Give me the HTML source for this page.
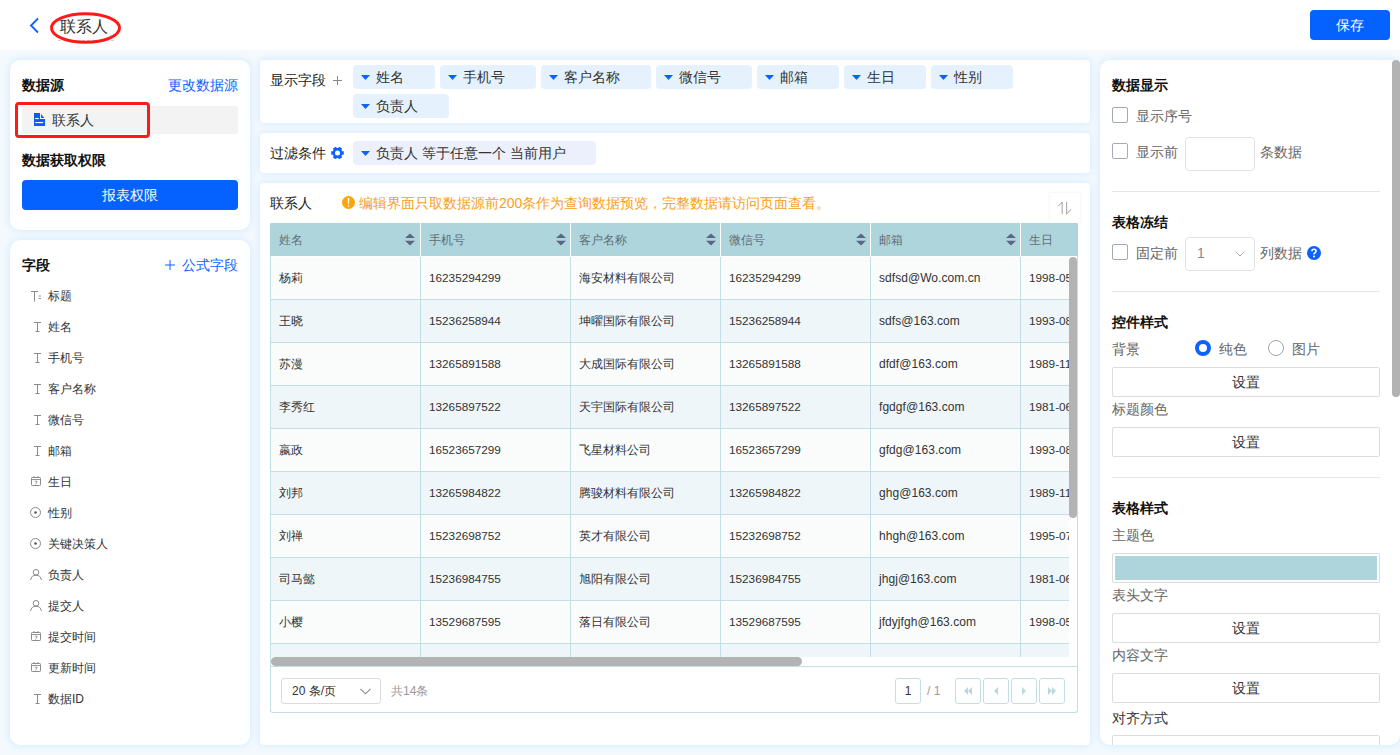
<!DOCTYPE html>
<html><head><meta charset="utf-8">
<style>
*{box-sizing:border-box;margin:0;padding:0}
html,body{width:1400px;height:755px;overflow:hidden}
body{position:relative;background:#f4f9fe;font-family:"Liberation Sans",sans-serif;color:#333;font-size:14px}
.a{position:absolute;white-space:nowrap}
.hdr{left:0;top:0;width:1400px;height:50px;background:#fff}
.panel{position:absolute;background:#fff;box-shadow:0 0 6px 1px rgba(212,236,255,.95)}
.t14{font-size:14px;line-height:16px}
.t12{font-size:12px;line-height:14px}
.b{font-weight:bold;color:#111}
.blue{color:#0d62ff}
/* left fields */
.fld{position:absolute;left:48px;font-size:12px;line-height:14px;color:#333}
.ic{position:absolute;left:30px}
.chip{position:absolute;height:24px;background:#e5f2fe;border-radius:4px;font-size:14px;line-height:24px;color:#333}
.chip .tri{position:absolute;left:8px;top:9.5px}
.chip span{position:absolute;left:23px;top:0}
.th{position:absolute;top:0;width:150px;height:33px;border-left:1px solid #fff;font-size:12px;line-height:35px;color:#5f6f78;padding-left:8px}
.th .srt{position:absolute;left:135px;top:10px}
.tr{position:absolute;left:0;width:900px;height:43px;border-bottom:1px solid #c3dfe6}
.td{position:absolute;top:0;width:150px;height:42px;border-left:1px solid #c3dfe6;font-size:12px;line-height:42px;color:#333;padding-left:8px;overflow:hidden}
.pg{border:1px solid #c3dfe6;border-radius:3px;background:#fff}
.lat{font-size:11.75px}
.em{font-size:12px;letter-spacing:0.05px}
</style></head><body>
<div class="a hdr"></div>
<!-- back arrow -->
<svg class="a" style="left:28px;top:17px" width="13" height="17" viewBox="0 0 13 17"><path d="M10 1.5 L3 8.5 L10 15.5" fill="none" stroke="#0d62ff" stroke-width="1.8"/></svg>
<div class="a" style="left:58px;top:40px;width:56px;height:1px;border-top:1px dashed #d4d4d4"></div><div class="a" style="left:60px;top:17px;font-size:16px;line-height:19px;color:#333">联系人</div>
<svg class="a" style="left:50px;top:12px" width="72" height="33" viewBox="0 0 72 33"><ellipse cx="35.5" cy="16" rx="34" ry="14.3" fill="none" stroke="#ff1a1a" stroke-width="3"/></svg>
<div class="a" style="left:1310px;top:10px;width:80px;height:30px;background:#0662ff;border-radius:4px;color:#fff;font-size:14px;line-height:30px;text-align:center">保存</div>

<!-- left panel 1 -->
<div class="panel" style="left:10px;top:60px;width:240px;height:170px;border-radius:10px"></div>
<div class="a t14 b" style="left:22px;top:77px">数据源</div>
<div class="a t14 blue" style="left:168px;top:77px">更改数据源</div>
<div class="a" style="left:22px;top:106px;width:216px;height:28px;background:#f3f3f3;border-radius:2px"></div>
<svg class="a" style="left:33px;top:113px" width="12" height="13" viewBox="0 0 12 13"><path d="M1 0H7V5.9H12V13H1Z" fill="#0b5cff"/><path d="M8 0.9V4.9H11.3Z" fill="#0b5cff"/><rect x="2.2" y="5" width="3.6" height="1.1" fill="#fff"/><rect x="2.2" y="9" width="8" height="1.1" fill="#fff"/></svg>
<div class="a t14" style="left:52px;top:112px;color:#333">联系人</div>
<div class="a" style="left:15px;top:102px;width:135px;height:36px;border:3px solid #ff1a1a;border-radius:4px"></div>
<div class="a t14 b" style="left:22px;top:152px">数据获取权限</div>
<div class="a" style="left:22px;top:180px;width:216px;height:30px;background:#0662ff;border-radius:4px;color:#fff;font-size:14px;line-height:30px;text-align:center">报表权限</div>

<!-- left panel 2 -->
<div class="panel" style="left:10px;top:240px;width:240px;height:505px;border-radius:10px"></div>
<div class="a t14 b" style="left:22px;top:257px">字段</div>
<svg class="a" style="left:165px;top:260px" width="10" height="10" viewBox="0 0 10 10"><path d="M5 0V10M0 5H10" stroke="#0d62ff" stroke-width="1"/></svg><div class="a t14 blue" style="left:182px;top:257px">公式字段</div>
<div class="a" style="left:31px;top:291px;line-height:0"><svg width="11" height="11" viewBox="0 0 11 11"><path d="M0 0.5H7M3.5 0.5V10.5" stroke="#8a8a8a" stroke-width="1" fill="none"/><path d="M7.5 5H10M7.5 7.5H10" stroke="#8a8a8a" stroke-width="0.9" fill="none"/></svg></div><div class="fld" style="top:289px">标题</div>
<div class="a" style="left:33px;top:322px;line-height:0"><svg width="9" height="10" viewBox="0 0 9 10"><path d="M1 0.5H8M4.5 0.5V9.5M2.5 9.5H6.5" stroke="#8a8a8a" stroke-width="1" fill="none"/></svg></div><div class="fld" style="top:320px">姓名</div>
<div class="a" style="left:33px;top:353px;line-height:0"><svg width="9" height="10" viewBox="0 0 9 10"><path d="M1 0.5H8M4.5 0.5V9.5M2.5 9.5H6.5" stroke="#8a8a8a" stroke-width="1" fill="none"/></svg></div><div class="fld" style="top:351px">手机号</div>
<div class="a" style="left:33px;top:384px;line-height:0"><svg width="9" height="10" viewBox="0 0 9 10"><path d="M1 0.5H8M4.5 0.5V9.5M2.5 9.5H6.5" stroke="#8a8a8a" stroke-width="1" fill="none"/></svg></div><div class="fld" style="top:382px">客户名称</div>
<div class="a" style="left:33px;top:415px;line-height:0"><svg width="9" height="10" viewBox="0 0 9 10"><path d="M1 0.5H8M4.5 0.5V9.5M2.5 9.5H6.5" stroke="#8a8a8a" stroke-width="1" fill="none"/></svg></div><div class="fld" style="top:413px">微信号</div>
<div class="a" style="left:33px;top:446px;line-height:0"><svg width="9" height="10" viewBox="0 0 9 10"><path d="M1 0.5H8M4.5 0.5V9.5M2.5 9.5H6.5" stroke="#8a8a8a" stroke-width="1" fill="none"/></svg></div><div class="fld" style="top:444px">邮箱</div>
<div class="a" style="left:31px;top:476px;line-height:0"><svg width="10" height="10" viewBox="0 0 10 10"><rect x="0.5" y="1.5" width="9" height="8" rx="0.8" fill="none" stroke="#8a8a8a" stroke-width="1"/><path d="M0.5 3.5H9.5M3 0V2M7 0V2" stroke="#8a8a8a" stroke-width="0.9"/><path d="M3.6 5.2H6.2L4.6 8.4" stroke="#8a8a8a" stroke-width="0.8" fill="none"/></svg></div><div class="fld" style="top:475px">生日</div>
<div class="a" style="left:30px;top:507px;line-height:0"><svg width="11" height="11" viewBox="0 0 11 11"><circle cx="5.5" cy="5.5" r="5" fill="none" stroke="#8a8a8a" stroke-width="1"/><circle cx="5.5" cy="5.5" r="1.3" fill="#555"/></svg></div><div class="fld" style="top:506px">性别</div>
<div class="a" style="left:30px;top:538px;line-height:0"><svg width="11" height="11" viewBox="0 0 11 11"><circle cx="5.5" cy="5.5" r="5" fill="none" stroke="#8a8a8a" stroke-width="1"/><circle cx="5.5" cy="5.5" r="1.3" fill="#555"/></svg></div><div class="fld" style="top:537px">关键决策人</div>
<div class="a" style="left:30px;top:569px;line-height:0"><svg width="12" height="11" viewBox="0 0 12 11"><circle cx="6" cy="3.3" r="2.8" fill="none" stroke="#8a8a8a" stroke-width="1"/><path d="M0.6 11Q1.3 6.2 6 6.2Q10.7 6.2 11.4 11" fill="none" stroke="#8a8a8a" stroke-width="1"/></svg></div><div class="fld" style="top:568px">负责人</div>
<div class="a" style="left:30px;top:600px;line-height:0"><svg width="12" height="11" viewBox="0 0 12 11"><circle cx="6" cy="3.3" r="2.8" fill="none" stroke="#8a8a8a" stroke-width="1"/><path d="M0.6 11Q1.3 6.2 6 6.2Q10.7 6.2 11.4 11" fill="none" stroke="#8a8a8a" stroke-width="1"/></svg></div><div class="fld" style="top:599px">提交人</div>
<div class="a" style="left:31px;top:631px;line-height:0"><svg width="10" height="10" viewBox="0 0 10 10"><rect x="0.5" y="1.5" width="9" height="8" rx="0.8" fill="none" stroke="#8a8a8a" stroke-width="1"/><path d="M0.5 3.5H9.5M3 0V2M7 0V2" stroke="#8a8a8a" stroke-width="0.9"/><path d="M3.6 5.2H6.2L4.6 8.4" stroke="#8a8a8a" stroke-width="0.8" fill="none"/></svg></div><div class="fld" style="top:630px">提交时间</div>
<div class="a" style="left:31px;top:662px;line-height:0"><svg width="10" height="10" viewBox="0 0 10 10"><rect x="0.5" y="1.5" width="9" height="8" rx="0.8" fill="none" stroke="#8a8a8a" stroke-width="1"/><path d="M0.5 3.5H9.5M3 0V2M7 0V2" stroke="#8a8a8a" stroke-width="0.9"/><path d="M3.6 5.2H6.2L4.6 8.4" stroke="#8a8a8a" stroke-width="0.8" fill="none"/></svg></div><div class="fld" style="top:661px">更新时间</div>
<div class="a" style="left:33px;top:694px;line-height:0"><svg width="9" height="10" viewBox="0 0 9 10"><path d="M1 0.5H8M4.5 0.5V9.5M2.5 9.5H6.5" stroke="#8a8a8a" stroke-width="1" fill="none"/></svg></div><div class="fld" style="top:692px">数据ID</div>

<div class="panel" style="left:260px;top:60px;width:830px;height:63px;border-radius:4px"></div>
<div class="a t14" style="left:270px;top:72px;color:#222">显示字段</div>
<svg class="a" style="left:333px;top:76px" width="9" height="9" viewBox="0 0 9 9"><path d="M4.5 0V9M0 4.5H9" stroke="#888" stroke-width="1"/></svg>
<div class="chip" style="left:353px;top:65px;width:82px"><svg class="tri" width="9" height="5" viewBox="0 0 9 5"><path d="M0 0H9L4.5 5Z" fill="#0d62ff"/></svg><span>姓名</span></div>
<div class="chip" style="left:440px;top:65px;width:96px"><svg class="tri" width="9" height="5" viewBox="0 0 9 5"><path d="M0 0H9L4.5 5Z" fill="#0d62ff"/></svg><span>手机号</span></div>
<div class="chip" style="left:541px;top:65px;width:110px"><svg class="tri" width="9" height="5" viewBox="0 0 9 5"><path d="M0 0H9L4.5 5Z" fill="#0d62ff"/></svg><span>客户名称</span></div>
<div class="chip" style="left:656px;top:65px;width:96px"><svg class="tri" width="9" height="5" viewBox="0 0 9 5"><path d="M0 0H9L4.5 5Z" fill="#0d62ff"/></svg><span>微信号</span></div>
<div class="chip" style="left:757px;top:65px;width:82px"><svg class="tri" width="9" height="5" viewBox="0 0 9 5"><path d="M0 0H9L4.5 5Z" fill="#0d62ff"/></svg><span>邮箱</span></div>
<div class="chip" style="left:844px;top:65px;width:82px"><svg class="tri" width="9" height="5" viewBox="0 0 9 5"><path d="M0 0H9L4.5 5Z" fill="#0d62ff"/></svg><span>生日</span></div>
<div class="chip" style="left:931px;top:65px;width:82px"><svg class="tri" width="9" height="5" viewBox="0 0 9 5"><path d="M0 0H9L4.5 5Z" fill="#0d62ff"/></svg><span>性别</span></div>
<div class="chip" style="left:353px;top:94px;width:96px"><svg class="tri" width="9" height="5" viewBox="0 0 9 5"><path d="M0 0H9L4.5 5Z" fill="#0d62ff"/></svg><span>负责人</span></div>
<div class="panel" style="left:260px;top:133px;width:830px;height:40px;border-radius:4px"></div>
<div class="a t14" style="left:270px;top:145px;color:#222">过滤条件</div>
<svg class="a" style="left:331px;top:147px" width="13" height="12" viewBox="0 0 13 12"><path fill-rule="evenodd" d="M11.14 4.13 L12.78 4.32 L12.78 7.68 L11.14 7.87 L10.44 9.08 L11.10 10.60 L8.18 12.28 L7.20 10.95 L5.80 10.95 L4.82 12.28 L1.90 10.60 L2.56 9.08 L1.86 7.87 L0.22 7.68 L0.22 4.32 L1.86 4.13 L2.56 2.92 L1.90 1.40 L4.82 -0.28 L5.80 1.05 L7.20 1.05 L8.18 -0.28 L11.10 1.40 L10.44 2.92Z M9.0 6 A2.5 2.5 0 1 0 4.0 6 A2.5 2.5 0 1 0 9.0 6Z" fill="#0d62ff"/></svg>
<div class="chip" style="left:353px;top:141px;width:243px;background:#ebf0fc"><svg class="tri" width="9" height="5" viewBox="0 0 9 5"><path d="M0 0H9L4.5 5Z" fill="#0d62ff"/></svg><span>负责人 等于任意一个 当前用户</span></div>
<div class="panel" style="left:260px;top:183px;width:830px;height:562px;border-radius:4px"></div>
<div class="a t14" style="left:270px;top:195px;color:#222">联系人</div>
<svg class="a" style="left:342px;top:196px" width="13" height="13" viewBox="0 0 13 13"><circle cx="6.5" cy="6.5" r="6.5" fill="#ffa30a"/><path d="M5.6 2H7.4L7 8.3H6Z" fill="#fff"/><rect x="5.8" y="9.4" width="1.4" height="1.4" fill="#fff"/></svg>
<div class="a t14" style="left:359px;top:195px;color:#f9a01a">编辑界面只取数据源前200条作为查询数据预览，完整数据请访问页面查看。</div>
<div class="a" style="left:1050px;top:193px;width:30px;height:30px;background:#fff;box-shadow:0 0 3px rgba(0,0,0,.08)"></div>
<svg class="a" style="left:1056px;top:200px" width="16" height="16" viewBox="0 0 16 16"><path d="M2.2 6.3L6.2 2V14.2M10.7 2V14.2L15 9.2" stroke="#a0a0a0" stroke-width="1" fill="none"/></svg>
<div class="a" style="left:270px;top:223px;width:808px;height:490px;border:1px solid #c3dfe6;border-top:none;border-radius:0 0 3px 3px"></div>
<div class="a" style="left:270px;top:223px;width:808px;height:33px;background:#aed4dc;overflow:hidden;border-radius:2px 2px 0 0">
<div class="th" style="left:0px;border-left:none;padding-left:9px">姓名<svg class="srt" width="10" height="13" viewBox="0 0 10 13"><path d="M5 0.4L10 5H0Z M0 7.8H10L5 12.4Z" fill="#5b6680"/></svg></div>
<div class="th" style="left:150px">手机号<svg class="srt" width="10" height="13" viewBox="0 0 10 13"><path d="M5 0.4L10 5H0Z M0 7.8H10L5 12.4Z" fill="#5b6680"/></svg></div>
<div class="th" style="left:300px">客户名称<svg class="srt" width="10" height="13" viewBox="0 0 10 13"><path d="M5 0.4L10 5H0Z M0 7.8H10L5 12.4Z" fill="#5b6680"/></svg></div>
<div class="th" style="left:450px">微信号<svg class="srt" width="10" height="13" viewBox="0 0 10 13"><path d="M5 0.4L10 5H0Z M0 7.8H10L5 12.4Z" fill="#5b6680"/></svg></div>
<div class="th" style="left:600px">邮箱<svg class="srt" width="10" height="13" viewBox="0 0 10 13"><path d="M5 0.4L10 5H0Z M0 7.8H10L5 12.4Z" fill="#5b6680"/></svg></div>
<div class="th" style="left:750px">生日</div>
</div>
<div class="a" style="left:270px;top:257px;width:799px;height:400px;overflow:hidden">
<div class="tr" style="top:0px;background:#fafcfc">
<div class="td" style="left:0px;padding-left:8px">杨莉</div>
<div class="td" style="left:150px"><span class="lat">16235294299</span></div>
<div class="td" style="left:300px">海安材料有限公司</div>
<div class="td" style="left:450px"><span class="lat">16235294299</span></div>
<div class="td" style="left:600px"><span class="em">sdfsd@Wo.com.cn</span></div>
<div class="td" style="left:750px"><span class="lat">1998-05-12</span></div>
</div>
<div class="tr" style="top:43px;background:#eff6f9">
<div class="td" style="left:0px;padding-left:8px">王晓</div>
<div class="td" style="left:150px"><span class="lat">15236258944</span></div>
<div class="td" style="left:300px">坤曜国际有限公司</div>
<div class="td" style="left:450px"><span class="lat">15236258944</span></div>
<div class="td" style="left:600px"><span class="em">sdfs@163.com</span></div>
<div class="td" style="left:750px"><span class="lat">1993-08-10</span></div>
</div>
<div class="tr" style="top:86px;background:#fafcfc">
<div class="td" style="left:0px;padding-left:8px">苏漫</div>
<div class="td" style="left:150px"><span class="lat">13265891588</span></div>
<div class="td" style="left:300px">大成国际有限公司</div>
<div class="td" style="left:450px"><span class="lat">13265891588</span></div>
<div class="td" style="left:600px"><span class="em">dfdf@163.com</span></div>
<div class="td" style="left:750px"><span class="lat">1989-11-12</span></div>
</div>
<div class="tr" style="top:129px;background:#eff6f9">
<div class="td" style="left:0px;padding-left:8px">李秀红</div>
<div class="td" style="left:150px"><span class="lat">13265897522</span></div>
<div class="td" style="left:300px">天宇国际有限公司</div>
<div class="td" style="left:450px"><span class="lat">13265897522</span></div>
<div class="td" style="left:600px"><span class="em">fgdgf@163.com</span></div>
<div class="td" style="left:750px"><span class="lat">1981-06-14</span></div>
</div>
<div class="tr" style="top:172px;background:#fafcfc">
<div class="td" style="left:0px;padding-left:8px">嬴政</div>
<div class="td" style="left:150px"><span class="lat">16523657299</span></div>
<div class="td" style="left:300px">飞星材料公司</div>
<div class="td" style="left:450px"><span class="lat">16523657299</span></div>
<div class="td" style="left:600px"><span class="em">gfdg@163.com</span></div>
<div class="td" style="left:750px"><span class="lat">1993-08-10</span></div>
</div>
<div class="tr" style="top:215px;background:#eff6f9">
<div class="td" style="left:0px;padding-left:8px">刘邦</div>
<div class="td" style="left:150px"><span class="lat">13265984822</span></div>
<div class="td" style="left:300px">腾骏材料有限公司</div>
<div class="td" style="left:450px"><span class="lat">13265984822</span></div>
<div class="td" style="left:600px"><span class="em">ghg@163.com</span></div>
<div class="td" style="left:750px"><span class="lat">1989-11-12</span></div>
</div>
<div class="tr" style="top:258px;background:#fafcfc">
<div class="td" style="left:0px;padding-left:8px">刘禅</div>
<div class="td" style="left:150px"><span class="lat">15232698752</span></div>
<div class="td" style="left:300px">英才有限公司</div>
<div class="td" style="left:450px"><span class="lat">15232698752</span></div>
<div class="td" style="left:600px"><span class="em">hhgh@163.com</span></div>
<div class="td" style="left:750px"><span class="lat">1995-07-14</span></div>
</div>
<div class="tr" style="top:301px;background:#eff6f9">
<div class="td" style="left:0px;padding-left:8px">司马懿</div>
<div class="td" style="left:150px"><span class="lat">15236984755</span></div>
<div class="td" style="left:300px">旭阳有限公司</div>
<div class="td" style="left:450px"><span class="lat">15236984755</span></div>
<div class="td" style="left:600px"><span class="em">jhgj@163.com</span></div>
<div class="td" style="left:750px"><span class="lat">1981-06-14</span></div>
</div>
<div class="tr" style="top:344px;background:#fafcfc">
<div class="td" style="left:0px;padding-left:8px">小樱</div>
<div class="td" style="left:150px"><span class="lat">13529687595</span></div>
<div class="td" style="left:300px">落日有限公司</div>
<div class="td" style="left:450px"><span class="lat">13529687595</span></div>
<div class="td" style="left:600px"><span class="em">jfdyjfgh@163.com</span></div>
<div class="td" style="left:750px"><span class="lat">1998-05-12</span></div>
</div>
<div class="tr" style="top:387px;background:#eff6f9">
<div class="td" style="left:0px;padding-left:8px"></div>
<div class="td" style="left:150px"></div>
<div class="td" style="left:300px"></div>
<div class="td" style="left:450px"></div>
<div class="td" style="left:600px"></div>
<div class="td" style="left:750px"></div>
</div>
</div>
<div class="a" style="left:1069px;top:257px;width:8px;height:261px;background:#b3b3b3;border-radius:4px"></div>
<div class="a" style="left:271px;top:657px;width:531px;height:9px;background:#b3b3b3;border-radius:4.5px"></div>
<div class="a" style="left:270px;top:666px;width:808px;height:1px;background:#c3dfe6"></div>
<div class="a" style="left:281px;top:678px;width:100px;height:26px;border:1px solid #dcdcdc;border-radius:3px;background:#fff"></div>
<div class="a t12" style="left:292px;top:684px;color:#333">20 条/页</div>
<svg class="a" style="left:360px;top:688px" width="11" height="7" viewBox="0 0 11 7"><path d="M0.5 0.8L5.5 5.8L10.5 0.8" stroke="#888" stroke-width="1.1" fill="none"/></svg>
<div class="a t12" style="left:391px;top:684px;color:#999">共14条</div>
<div class="a pg" style="left:895px;top:678px;width:26px;height:26px;color:#333;font-size:12px;line-height:24px;text-align:center">1</div>
<div class="a t12" style="left:927px;top:684px;color:#999">/ 1</div>
<div class="a pg" style="left:955px;top:678px;width:26px;height:26px"><svg style="position:absolute;left:7px;top:7px" width="10" height="10" viewBox="0 0 10 10"><path d="M1 5L5 1V9Z M5 5L9 1V9Z" fill="#b7d9df"/></svg></div>
<div class="a pg" style="left:983px;top:678px;width:26px;height:26px"><svg style="position:absolute;left:7px;top:7px" width="10" height="10" viewBox="0 0 10 10"><path d="M3 5L7 1V9Z" fill="#b7d9df"/></svg></div>
<div class="a pg" style="left:1011px;top:678px;width:26px;height:26px"><svg style="position:absolute;left:7px;top:7px" width="10" height="10" viewBox="0 0 10 10"><path d="M3 1L7 5L3 9Z" fill="#b7d9df"/></svg></div>
<div class="a pg" style="left:1039px;top:678px;width:26px;height:26px"><svg style="position:absolute;left:7px;top:7px" width="10" height="10" viewBox="0 0 10 10"><path d="M1 1L5 5L1 9Z M5 1L9 5L5 9Z" fill="#b7d9df"/></svg></div>
<div class="panel" style="left:1100px;top:60px;width:300px;height:685px;border-radius:10px;overflow:hidden">
<div class="a t14 b" style="left:12px;top:17px;">数据显示</div>
<div class="a" style="left:12px;top:47px;width:16px;height:16px;border:1px solid #a3a8ba;border-radius:2px"></div>
<div class="a t14" style="left:36px;top:48px;color:#666">显示序号</div>
<div class="a" style="left:12px;top:83px;width:16px;height:16px;border:1px solid #a3a8ba;border-radius:2px"></div>
<div class="a t14" style="left:36px;top:84px;color:#666">显示前</div>
<div class="a" style="left:85px;top:77px;width:70px;height:34px;border:1px solid #e2e2e2;border-radius:4px"></div>
<div class="a t14" style="left:160px;top:84px;color:#666">条数据</div>
<div class="a" style="left:12px;top:131px;width:268px;height:1px;background:#e6e6e6"></div>
<div class="a t14 b" style="left:12px;top:154px;">表格冻结</div>
<div class="a" style="left:12px;top:184px;width:16px;height:16px;border:1px solid #a3a8ba;border-radius:2px"></div>
<div class="a t14" style="left:36px;top:185px;color:#666">固定前</div>
<div class="a" style="left:85px;top:177px;width:70px;height:34px;border:1px solid #e2e2e2;border-radius:4px"></div>
<div class="a t14" style="left:97px;top:185px;color:#888">1</div>
<svg class="a" style="left:135px;top:191px" width="10" height="6" viewBox="0 0 10 6"><path d="M0.5 0.5L5 5L9.5 0.5" stroke="#aaa" stroke-width="1" fill="none"/></svg>
<div class="a t14" style="left:160px;top:185px;color:#666">列数据</div>
<svg class="a" style="left:207px;top:186px" width="14" height="14" viewBox="0 0 14 14"><circle cx="7" cy="7" r="7" fill="#0d62ff"/><path d="M4.9 5.3Q4.9 3.2 7 3.2Q9.1 3.2 9.1 5.1Q9.1 6.3 7.8 6.9Q7 7.3 7 8.4" stroke="#fff" stroke-width="1.6" fill="none"/><circle cx="7" cy="10.6" r="1" fill="#fff"/></svg>
<div class="a" style="left:12px;top:231px;width:268px;height:1px;background:#e6e6e6"></div>
<div class="a t14 b" style="left:12px;top:254px;">控件样式</div>
<div class="a t14" style="left:12px;top:281px;color:#666">背景</div>
<div class="a" style="left:95px;top:280px;width:16px;height:16px;border:4px solid #0d62ff;border-radius:50%;background:#fff"></div>
<div class="a t14" style="left:119px;top:281px;color:#666">纯色</div>
<div class="a" style="left:168px;top:280px;width:16px;height:16px;border:1px solid #9ea4b6;border-radius:50%;background:#fff"></div>
<div class="a t14" style="left:192px;top:281px;color:#666">图片</div>
<div class="a" style="left:12px;top:307px;width:268px;height:30px;border:1px solid #dcdcdc;border-radius:2px;text-align:center;font-size:14px;line-height:28px;color:#333">设置</div>
<div class="a t14" style="left:12px;top:341px;color:#666">标题颜色</div>
<div class="a" style="left:12px;top:367px;width:268px;height:30px;border:1px solid #dcdcdc;border-radius:2px;text-align:center;font-size:14px;line-height:28px;color:#333">设置</div>
<div class="a" style="left:12px;top:417px;width:268px;height:1px;background:#e6e6e6"></div>
<div class="a t14 b" style="left:12px;top:440px;">表格样式</div>
<div class="a t14" style="left:12px;top:467px;color:#666">主题色</div>
<div class="a" style="left:12px;top:493px;width:268px;height:30px;border:1px solid #dcdcdc;border-radius:2px;padding:2px"><div style="width:100%;height:100%;background:#aed4dc"></div></div>
<div class="a t14" style="left:12px;top:527px;color:#666">表头文字</div>
<div class="a" style="left:12px;top:553px;width:268px;height:30px;border:1px solid #dcdcdc;border-radius:2px;text-align:center;font-size:14px;line-height:28px;color:#333">设置</div>
<div class="a t14" style="left:12px;top:587px;color:#666">内容文字</div>
<div class="a" style="left:12px;top:613px;width:268px;height:30px;border:1px solid #dcdcdc;border-radius:2px;text-align:center;font-size:14px;line-height:28px;color:#333">设置</div>
<div class="a t14" style="left:12px;top:650px;color:#333">对齐方式</div>
<div class="a" style="left:12px;top:675px;width:268px;height:30px;border:1px solid #dcdcdc;border-radius:2px"></div>
</div>
<div class="a" style="left:1392px;top:60px;width:8px;height:337px;background:#b3b3b3;border-radius:4px"></div>
</body></html>
